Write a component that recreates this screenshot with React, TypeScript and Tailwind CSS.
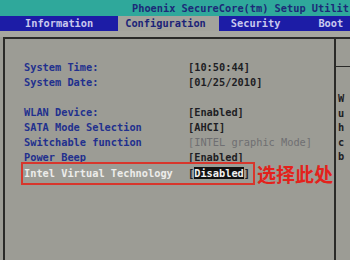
import React from 'react'

const mono = { fontFamily: '"DejaVu Sans Mono", "Liberation Mono", monospace' }

const rows: { label: string; value: React.ReactNode; gap?: boolean; dim?: boolean }[] = [
  { label: 'System Time:', value: '[10:50:44]' },
  { label: 'System Date:', value: '[01/25/2010]' },
  { label: '', value: '', gap: true },
  { label: 'WLAN Device:', value: '[Enabled]' },
  { label: 'SATA Mode Selection', value: '[AHCI]' },
  { label: 'Switchable function', value: '[INTEL graphic Mode]', dim: true },
  { label: 'Power Beep', value: '[Enabled]' },
]

export default function App() {
  return (
    <div
      className="w-[350px] h-[260px] overflow-hidden bg-[#9c9c95] text-[10.3px] font-bold flex flex-col"
      style={mono}
    >
      <div className="h-[16px] bg-[#2fa89b] text-[#1c2a78] pl-[132px] leading-[16px] whitespace-nowrap overflow-hidden">
        Phoenix SecureCore(tm) Setup Utilit
      </div>

      <div className="h-[15px] bg-[#1c1ca6] flex items-center leading-[15px] whitespace-nowrap">
        <span className="ml-[25px] text-[#c9c9ee]">Information</span>
        <span className="ml-[25px] h-full bg-[#a3a39c] text-[#1c2378] pl-[7px] pr-[13px]">
          Configuration
        </span>
        <span className="ml-[12px] text-[#c9c9ee]">Security</span>
        <span className="ml-[38px] text-[#c9c9ee]">Boot</span>
      </div>

      <div className="h-[6px] bg-[#a6a69f]" />

      <div className="flex-1 flex ml-[3px] border-l-2 border-t-2 border-[#2a2a28]">
        <div className="w-[329px] pl-[19px] pt-[21px]">
          {rows.map((r, i) =>
            r.gap ? (
              <div key={i} className="h-[15px]" />
            ) : (
              <div key={i} className="flex h-[15px] leading-[15px] whitespace-nowrap">
                <span className="w-[164px] text-[#22308e]">{r.label}</span>
                <span className={r.dim ? 'text-[#6f6f72] font-normal' : 'text-[#1e1e24]'}>
                  {r.value}
                </span>
              </div>
            ),
          )}
          <div className="flex items-center -mt-[3px] -ml-[3px]">
            <div className="flex w-[234px] h-[23px] items-center pl-[1px] border-2 border-[#d8362c] whitespace-nowrap">
              <span className="w-[164px] text-[#ececea]">Intel Virtual Technology</span>
              <span className="text-[#1e1e24]">
                [<span className="bg-[#111] text-[#f2f2f2]">Disabled</span>]
              </span>
            </div>
            <span
              className="ml-[2px] text-[19px] font-bold text-[#e3221c] leading-[20px]"
              style={{ fontFamily: '"Noto Sans CJK SC", sans-serif' }}
            >
              选择此处
            </span>
          </div>
        </div>

        <div className="flex-1 border-l-2 border-[#2a2a28] flex flex-col">
          <div className="h-[28px] border-b border-[#2a2a28]" />
          <div className="pl-[2px] pt-[24px] text-[#1e1e24] leading-[14.5px]">
            <div>W</div>
            <div>u</div>
            <div>h</div>
            <div>c</div>
            <div>b</div>
          </div>
        </div>
      </div>
    </div>
  )
}
